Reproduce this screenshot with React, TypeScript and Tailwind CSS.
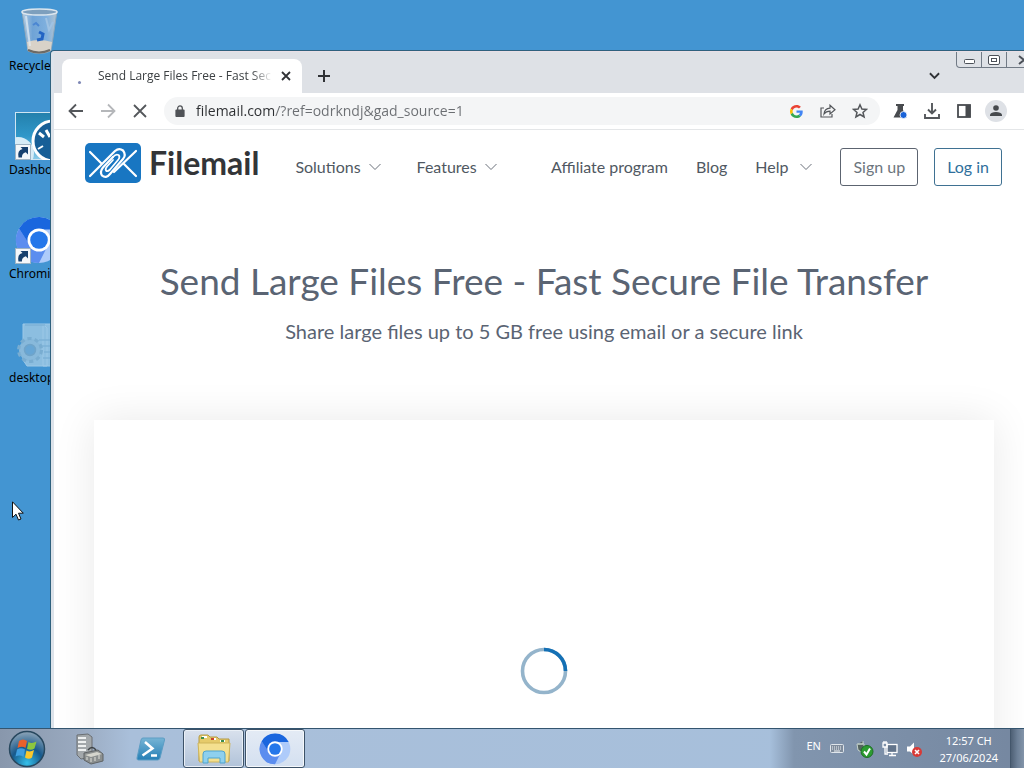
import type { ReactNode } from "react";

function RecycleBinIcon() {
  return (
    <svg viewBox="0 0 48 48" className="w-12 h-12">
      <defs>
        <linearGradient id="glass" x1="0" x2="1">
          <stop offset="0" stopColor="#b9cfe2" />
          <stop offset="0.3" stopColor="#6fa3d6" />
          <stop offset="0.7" stopColor="#7fb0de" />
          <stop offset="1" stopColor="#b4c4d0" />
        </linearGradient>
      </defs>
      <path d="M7 3 L42 3 L36 43 Q24 48 13 43 Z" fill="url(#glass)" stroke="#8fa9bd" />
      <path d="M12 34 Q24 30 37 34 L35.500 43 Q24 47 13 43 Z" fill="#d9d2c8" />
      <path d="M13 42 Q24 47 35 42" fill="none" stroke="#6d6a66" strokeWidth="2" />
      <ellipse cx="24.500" cy="4" rx="17.500" ry="3" fill="#7d9fbd" stroke="#dce6ee" strokeWidth="1.500" />
      <path d="M18 17 l3 -2 l3 3" fill="none" stroke="#4b86d2" strokeWidth="2" />
      <path d="M24 24 l4 2 l-1 5 l-5 1" fill="none" stroke="#2264c4" strokeWidth="3" />
      <path d="M31 10 L34 22 L38 14" fill="none" stroke="#9fc2e3" strokeWidth="2" />
      <path d="M11 8 L15 38" stroke="#e5eef5" strokeWidth="2" opacity="0.7" />
    </svg>
  );
}

function ShortcutArrow() {
  return (
    <g>
      <rect x="0.500" y="32.500" width="15" height="15" fill="#f4f7fa" stroke="#9fb4c4" />
      <path d="M3.500 45.500 Q2 38 7.500 37 L5.500 35 H13 V42.500 L10.800 40.300 Q6.500 41.500 7 45.500 Z" fill="#17406e" />
    </g>
  );
}

function DashboardIcon() {
  return (
    <svg viewBox="0 0 48 48" className="w-12 h-12">
      <defs>
        <linearGradient id="dash" x1="0" y1="0" x2="0" y2="1">
          <stop offset="0" stopColor="#2380ac" />
          <stop offset="0.500" stopColor="#2f97c9" />
          <stop offset="1" stopColor="#8ccbe9" />
        </linearGradient>
      </defs>
      <rect x="0.500" y="0.500" width="47" height="47" fill="url(#dash)" stroke="#cfe5f2" />
      <circle cx="3" cy="41" r="16" fill="#d7ecf7" />
      <circle cx="38" cy="29" r="20" fill="#175f97" stroke="#fff" strokeWidth="3" />
      <path d="M24 21 l5 4 M31 18 l4 7" stroke="#fff" strokeWidth="3" />
      <path d="M23 37 l5 -3" stroke="#fff" strokeWidth="2" />
      <ShortcutArrow />
    </svg>
  );
}

function ChromiumIcon({ shortcut, className }: { shortcut?: boolean; className: string }) {
  return (
    <svg viewBox="0 0 48 48" className={className}>
      <circle cx="24" cy="24" r="23" fill="#aecbfa" />
      <path d="M4 12.500 A23 23 0 0 0 24 47 L33 29 L15 29 Z" fill="#5b8def" />
      <path d="M4 12.500 A23 23 0 0 1 44.500 13.500 L24 13.500 A10.500 10.500 0 0 0 14.900 29.300 Z" fill="#1a66de" />
      <circle cx="24" cy="24" r="11.500" fill="#fff" />
      <circle cx="24" cy="24" r="8.800" fill="#2577ea" />
      {shortcut && <ShortcutArrow />}
    </svg>
  );
}

function IniFileIcon() {
  return (
    <svg viewBox="0 0 48 48" className="w-12 h-12 opacity-60">
      <path d="M8 4 H28 L32 8 V46 H12 L8 40 Z M28 4 H42 V46 H28 Z" fill="#bddaea" stroke="#d9ebf5" />
      <path d="M10 5 h20 M24 20 h16 M27 26 h14 M29 32 h12 M28 38 h13" stroke="#a3c5da" strokeWidth="1.500" />
      <circle cx="15" cy="30" r="11" fill="#b4cfdf" stroke="#9dbdd1" strokeWidth="4" strokeDasharray="4 3" />
      <circle cx="15" cy="30" r="10" fill="#b7d2e2" />
      <circle cx="15" cy="30" r="5.500" fill="#7fb2d7" stroke="#8eafc5" strokeWidth="1.500" />
    </svg>
  );
}

function FilemailLogo() {
  return (
    <svg viewBox="0 0 56 40" className="w-14 h-10">
      <rect width="56" height="40" rx="5" fill="#1876c2" />
      <g fill="none" stroke="#fff" strokeWidth="2.200" strokeLinecap="round" strokeLinejoin="round">
        <path d="M5 9 L16 20 M5 33 L30 8 Q34 4.500 38 7.500 Q41.500 12 38 16 L25 31 Q21 36 17 32.500 Q14.500 29 18 24.500 L28 14" />
        <path d="M51 8 L29 29 M51 33 L39 21" />
        <path d="M28 14 Q31 10.500 33.500 12 Q35.500 14 33 17 L25 26.500 Q22.500 29 21 27.500 Q20 26 22 23.500 L28 17" strokeWidth="1.800" />
      </g>
    </svg>
  );
}

function GoogleIcon() {
  return (
    <svg viewBox="0 0 48 48" className="w-[13px] h-[13px]">
      <path fill="#EA4335" d="M24 9.500c3.540 0 6.710 1.220 9.210 3.600l6.850-6.850C35.900 2.380 30.470 0 24 0 14.620 0 6.510 5.380 2.560 13.220l7.980 6.190C12.430 13.720 17.740 9.500 24 9.500z" />
      <path fill="#4285F4" d="M46.980 24.550c0-1.570-.15-3.090-.38-4.550H24v9.020h12.940c-.58 2.960-2.260 5.480-4.780 7.180l7.730 6c4.510-4.180 7.090-10.360 7.090-17.650z" />
      <path fill="#FBBC05" d="M10.530 28.590c-.48-1.450-.76-2.990-.76-4.590s.27-3.140.76-4.590l-7.980-6.190C.92 16.460 0 20.120 0 24c0 3.880.92 7.540 2.560 10.780l7.970-6.190z" />
      <path fill="#34A853" d="M24 48c6.480 0 11.930-2.130 15.890-5.810l-7.730-6c-2.150 1.450-4.920 2.300-8.160 2.300-6.260 0-11.570-4.220-13.470-9.910l-7.980 6.190C6.510 42.620 14.620 48 24 48z" />
    </svg>
  );
}

function Chevron() {
  return (
    <svg viewBox="0 0 12 8" className="w-3 h-2 text-[#6a717b]" fill="none" stroke="currentColor">
      <path d="M0.500 1 L6 6.500 L11.500 1" />
    </svg>
  );
}

function ToolButton({ label, children }: { label: string; children: ReactNode }) {
  return (
    <button aria-label={label} className="w-8 h-7 shrink-0 flex items-center justify-center text-[#54575b]">
      {children}
    </button>
  );
}

function DesktopItem({ label, children }: { label: string; children: ReactNode }) {
  return (
    <button className="w-[78px] h-[104px] pt-2 pl-[9px] flex flex-col items-start text-black">
      <span className="pl-[6px]">{children}</span>
      <span className="mt-[2px] text-xs leading-4 whitespace-nowrap">{label}</span>
    </button>
  );
}

function TabStrip() {
  return (
    <div className="h-[42px] shrink-0 flex items-end bg-[#dee1e6] border-t border-[#eadfe6] pl-2">
      <div className="w-60 h-[34px] pl-9 pr-2 flex items-center bg-white rounded-t-lg relative">
        <span className="absolute left-4 top-[22px] w-[3px] h-[3px] rounded-full bg-[#7e87b5]" />
        <span className="w-[174px] text-xs font-['Open_Sans',sans-serif] text-[#3c4043] whitespace-nowrap overflow-hidden [mask-image:linear-gradient(to_right,black_88%,transparent)]">
          Send Large Files Free - Fast Secure File Transfer
        </span>
        <button aria-label="Close tab" className="ml-auto w-4 h-4 flex items-center justify-center text-[#303236]">
          <svg viewBox="0 0 10 10" className="w-[10px] h-[10px]" stroke="currentColor" strokeWidth="1.800">
            <path d="M1 1 L9 9 M9 1 L1 9" />
          </svg>
        </button>
      </div>
      <button aria-label="New tab" className="w-11 h-[34px] flex items-center justify-center text-[#303236]">
        <svg viewBox="0 0 12 12" className="w-3 h-3" stroke="currentColor" strokeWidth="2">
          <path d="M6 0 V12 M0 6 H12" />
        </svg>
      </button>
      <button aria-label="Search tabs" className="ml-auto w-7 h-[34px] flex items-center justify-center text-[#303236]">
        <svg viewBox="0 0 12 8" className="w-[11px] h-2" fill="none" stroke="currentColor" strokeWidth="2">
          <path d="M1 1 L6 6 L11 1" />
        </svg>
      </button>
      <div className="self-start ml-2 flex h-4 border border-t-0 border-[#717a85] rounded-bl text-[#4b5058]">
        <button aria-label="Minimize" className="w-[25px] flex items-center justify-center border-r border-[#717a85]">
          <svg viewBox="0 0 13 9" className="w-[13px] h-[9px]">
            <rect x="1.500" y="4.500" width="10" height="4" rx="1" fill="#fff" stroke="currentColor" />
          </svg>
        </button>
        <button aria-label="Maximize" className="w-[25px] flex items-center justify-center border-r border-[#717a85]">
          <svg viewBox="0 0 12 10" className="w-3 h-[10px]" fill="#fff" stroke="currentColor">
            <rect x="0.500" y="0.500" width="11" height="9" rx="1.500" />
            <rect x="3.500" y="3.500" width="5" height="3" />
          </svg>
        </button>
        <button aria-label="Close" className="w-[26px] pl-2 flex items-center justify-center">
          <svg viewBox="0 0 12 10" className="w-3 h-[10px]" stroke="currentColor" strokeWidth="2">
            <path d="M1 1 L11 9 M11 1 L1 9" />
          </svg>
        </button>
      </div>
    </div>
  );
}

function Toolbar() {
  return (
    <div className="h-[37px] shrink-0 flex items-center bg-white border-b border-[#e4e6e8] pl-[6px] pr-[22px]">
      <ToolButton label="Back">
        <svg viewBox="0 0 16 16" className="w-4 h-4" fill="none" stroke="currentColor" strokeWidth="1.800">
          <path d="M15 8 H2 M8 1.500 L1.500 8 L8 14.500" />
        </svg>
      </ToolButton>
      <ToolButton label="Forward">
        <svg viewBox="0 0 16 16" className="w-4 h-4" fill="none" stroke="#b5b7ba" strokeWidth="1.800">
          <path d="M1 8 H14 M8 1.500 L14.500 8 L8 14.500" />
        </svg>
      </ToolButton>
      <ToolButton label="Stop">
        <svg viewBox="0 0 14 14" className="w-[14px] h-[14px]" stroke="currentColor" strokeWidth="1.800">
          <path d="M1 1 L13 13 M13 1 L1 13" />
        </svg>
      </ToolButton>
      <div className="flex-1 min-w-0 ml-2 mr-1 h-7 pl-[11px] pr-1 flex items-center bg-[#f4f5f6] rounded-full">
        <svg viewBox="0 0 10 13" className="w-[10px] h-3 shrink-0">
          <rect y="5" width="10" height="8" rx="1" fill="#505357" />
          <path d="M2.500 6 V3.500 a2.500 2.500 0 0 1 5 0 V6" fill="none" stroke="#505357" strokeWidth="1.400" />
        </svg>
        <input
          aria-label="Address"
          defaultValue="filemail.com/?ref=odrkndj&gad_source=1"
          className="flex-1 min-w-0 ml-[11px] text-sm font-['Open_Sans',sans-serif] outline-none text-transparent bg-clip-text bg-[linear-gradient(to_right,#2c2e31_78px,#6b6e72_78px)]"
        />
        <ToolButton label="Google"><GoogleIcon /></ToolButton>
        <ToolButton label="Share">
          <svg viewBox="0 0 16 14" className="w-4 h-[14px]" fill="none" stroke="currentColor" strokeWidth="1.200">
            <path d="M4 4 H1 V13 H12 V10" />
            <path d="M4 10 Q4.500 4.500 10 4.200 V1.200 L15 5.700 L10 10 V7.200 Q6 7.200 4 10 Z" />
          </svg>
        </ToolButton>
        <ToolButton label="Bookmark">
          <svg viewBox="0 0 16 16" className="w-4 h-4" fill="none" stroke="currentColor" strokeWidth="1.500">
            <path d="M8 1.800 L9.900 6 L14.500 6.400 L11 9.400 L12.100 14 L8 11.500 L3.900 14 L5 9.400 L1.500 6.400 L6.100 6 Z" />
          </svg>
        </ToolButton>
      </div>
      <ToolButton label="Experiments">
        <svg viewBox="0 0 16 16" className="w-4 h-4">
          <path d="M4 1 H12 V3 H11 V7 L14.500 14.500 H1.500 L5.500 7 V3 H4 Z" fill="#484b4f" />
          <circle cx="11.500" cy="12" r="3.500" fill="#1a63d8" stroke="#fff" strokeWidth="0.800" />
        </svg>
      </ToolButton>
      <ToolButton label="Downloads">
        <svg viewBox="0 0 16 16" className="w-4 h-4" fill="none" stroke="currentColor" strokeWidth="1.900">
          <path d="M8 0 V10 M4 6.500 L8 10.500 L12 6.500 M1 11 V15 H15 V11" />
        </svg>
      </ToolButton>
      <ToolButton label="Side panel">
        <svg viewBox="0 0 14 14" className="w-[14px] h-[14px]">
          <rect x="1" y="1" width="12" height="12" fill="none" stroke="#484b4f" strokeWidth="1.800" />
          <rect x="8.500" y="1" width="5" height="12" fill="#484b4f" />
        </svg>
      </ToolButton>
      <ToolButton label="Profile">
        <span className="w-[22px] h-[22px] rounded-full bg-[#dee1e6] flex items-center justify-center">
          <svg viewBox="0 0 12 12" className="w-3 h-3" fill="#46494d">
            <circle cx="6" cy="3" r="2.800" />
            <path d="M0 11 V9.500 Q1 7 6 7 Q11 7 12 9.500 V11 Z" />
          </svg>
        </span>
      </ToolButton>
    </div>
  );
}

function SiteHeader() {
  return (
    <header className="h-[74px] shrink-0 pl-[31px] pr-8 flex items-center text-base text-[#505862]">
      <a href="#" className="-mt-2 flex items-center gap-2 text-[#333538]">
        <FilemailLogo />
        <span className="text-[32px] leading-10 font-bold">Filemail</span>
      </a>
      <nav className="ml-9 flex items-center flex-1">
        <a href="#" className="flex items-center gap-2">
          Solutions <Chevron />
        </a>
        <a href="#" className="ml-9 flex items-center gap-2">
          Features <Chevron />
        </a>
        <span className="flex-1" />
        <a href="#" className="mr-7">Affiliate program</a>
        <a href="#" className="mr-7">Blog</a>
        <a href="#" className="mr-7 flex items-center gap-3">
          Help <Chevron />
        </a>
      </nav>
      <button className="h-[38px] px-3 mr-4 border border-[#5c6470] rounded-[3px] text-[#6c757d]">Sign up</button>
      <button className="h-[38px] px-3 border border-[#3f7192] rounded-[3px] text-[#2f6f9c]">Log in</button>
    </header>
  );
}

function BrowserWindow() {
  return (
    <section className="absolute left-[50px] top-[50px] -right-[10px] bottom-0 flex flex-col border-l border-t border-[#2f617e] rounded-tl bg-[#dde3ea] pl-[3px] overflow-hidden">
      <TabStrip />
      <Toolbar />
      <main className="flex-1 min-h-0 flex flex-col bg-white font-['Lato',sans-serif] overflow-hidden">
        <SiteHeader />
        <div className="shrink-0 pt-[53px] pb-[75px] text-center text-[#5a6473]">
          <h1 className="text-[37px] leading-[48px]">Send Large Files Free - Fast Secure File Transfer</h1>
          <p className="mt-3 text-xl leading-7">Share large files up to 5 GB free using email or a secure link</p>
        </div>
        <div className="mx-10 h-[500px] shrink-0 flex justify-center pt-[227px] bg-white shadow-[0_0_40px_rgba(0,0,0,0.09)]">
          <svg viewBox="0 0 48 48" className="w-12 h-12" fill="none" strokeWidth="3.600" role="status" aria-label="Loading">
            <circle cx="24" cy="24" r="21.500" stroke="#94b4cb" />
            <path d="M24 2.500 A21.500 21.500 0 0 1 45.500 24" stroke="#1470b5" />
          </svg>
        </div>
      </main>
    </section>
  );
}

function StartOrb() {
  return (
    <svg viewBox="0 0 38 38" className="w-[38px] h-[38px]">
      <defs>
        <radialGradient id="orb" cx="0.500" cy="0.900" r="0.900">
          <stop offset="0" stopColor="#35c0ea" />
          <stop offset="0.500" stopColor="#17598c" />
          <stop offset="1" stopColor="#8fa5b8" />
        </radialGradient>
      </defs>
      <circle cx="19" cy="19" r="17.500" fill="url(#orb)" stroke="#28485f" strokeWidth="1.500" />
      <path d="M11 11 Q15 8 19 11 L17.500 18 Q14 15.500 9.500 18 Z" fill="#e8612c" />
      <path d="M20.500 12 Q24 14 28.500 11.500 L26.500 18.500 Q23 21 19 18.800 Z" fill="#8cc63e" />
      <path d="M9 19.500 Q13 17 17 19.500 L15.500 27 Q12 24.500 7.500 26.500 Z" fill="#3f9fe0" />
      <path d="M18.500 20.500 Q22 22.500 26 20 L24 27.500 Q21 30 17 27.500 Z" fill="#fbc82c" />
    </svg>
  );
}

function ServerManagerIcon() {
  return (
    <svg viewBox="0 0 30 32" className="w-[30px] h-8">
      <path d="M3 2 L14 1 L18 4 V24 L7 26 L3 22 Z" fill="#a3a8ab" stroke="#6a6f73" />
      <path d="M4 5 h8 M4 9 h8 M4 13 h8 M4 17 h8" stroke="#eef0f0" strokeWidth="2" />
      <path d="M10 20 L24 17 L29 21 V28 L17 31 L10 27 Z" fill="#8b8f8f" stroke="#5f6365" />
      <path d="M11 22 L23 19 L28 21 L17 24 Z" fill="#d5d5cd" />
      <path d="M14 17 Q18 12 22 17" fill="none" stroke="#3e4346" strokeWidth="1.500" />
      <path d="M13 24 v3 M17 25 v4 M21 24 v4 M25 22 v4" stroke="#e1e1da" />
    </svg>
  );
}

function PowerShellIcon() {
  return (
    <svg viewBox="0 0 30 24" className="w-[30px] h-6">
      <defs>
        <linearGradient id="ps" x1="0" y1="0" x2="0" y2="1">
          <stop offset="0" stopColor="#76b4d5" />
          <stop offset="1" stopColor="#257fb6" />
        </linearGradient>
      </defs>
      <path d="M7 1 H27 Q29 1 28.500 3 L24 21 Q23.500 23 21.500 23 H2.500 Q0.500 23 1 21 L5 3 Q5.500 1 7 1 Z" fill="url(#ps)" stroke="#5c9dc4" />
      <path d="M9 5 L16.500 11.500 L6.500 18.500 M15 18.500 H21" fill="none" stroke="#fff" strokeWidth="2.500" />
    </svg>
  );
}

function ExplorerIcon() {
  return (
    <svg viewBox="0 0 34 30" className="w-[34px] h-[30px]">
      <path d="M2 3 Q2 1 4 1 H11 L13 3 H20 L22 5 H32 V27 H2 Z" fill="#e6cb6a" stroke="#b49a43" />
      <path d="M5 3 h5 M14 5 h5 M23 7 h5" stroke="#fff" strokeWidth="2" />
      <path d="M4 4 h3 M24 7 h3" stroke="#3d8d4d" strokeWidth="2" />
      <path d="M14 5 h3" stroke="#c9442d" strokeWidth="2" />
      <path d="M1 9 H33 L31.500 28 H2.500 Z" fill="#f4e08f" stroke="#cfb55a" />
      <path d="M6 29 V20 Q6 17 9 17 H25 Q28 17 28 20 V29 H23 V24 H11 V29 Z" fill="#8ed0ee" stroke="#4fa4cf" />
    </svg>
  );
}

function Taskbar() {
  return (
    <footer className="h-10 shrink-0 flex items-stretch border-t border-[#34556f] bg-[linear-gradient(to_right,#8897ac,#9aaac0_80px,#a9bfda_130px,#a6bfdb)]">
      <button aria-label="Start" className="w-[58px] pl-2 flex items-center">
        <StartOrb />
      </button>
      <button aria-label="Server Manager" className="w-[62px] flex items-center justify-center">
        <ServerManagerIcon />
      </button>
      <button aria-label="PowerShell" className="w-[62px] flex items-center justify-center">
        <PowerShellIcon />
      </button>
      <button aria-label="Explorer" className="w-[61px] mx-px flex items-center justify-center rounded-[3px] border border-[#3d5268] bg-linear-to-b from-[#d9e1ed] to-[#b1c3d9] shadow-[inset_0_0_0_1px_#e9eff6]">
        <ExplorerIcon />
      </button>
      <button aria-label="Chromium" className="w-[60px] flex items-center justify-center rounded-[3px] border border-[#3d5268] bg-linear-to-b from-[#e4ebf5] to-[#d4e0f0] shadow-[inset_0_0_0_1px_#f5f8fb]">
        <ChromiumIcon className="w-8 h-8" />
      </button>
      <div className="ml-auto pl-9 flex items-center text-[11px] text-white bg-[linear-gradient(to_right,#a6bfdb,#8195ae_24px,#7587a0)]">
        <span className="w-6 mb-1">EN</span>
        <svg viewBox="0 0 14 9" className="w-[14px] h-[9px]">
          <rect x="0.500" y="0.500" width="13" height="8" rx="1" fill="#7f8c9c" stroke="#dfe5eb" />
          <path d="M2 3 h10 M2 5 h10" stroke="#eef1f4" strokeDasharray="1 1" />
          <path d="M4 7 h6" stroke="#eef1f4" />
        </svg>
        <svg viewBox="0 0 18 18" className="ml-3 w-[18px] h-[18px]">
          <path d="M2 4 h5 v-3 M1 4 h7 v5 l-3 3 l-3 -2 z" fill="#55645f" stroke="#c6d4ce" />
          <circle cx="11" cy="11.500" r="6" fill="#2c9c31" stroke="#1d6e24" />
          <path d="M8 11.500 L10.500 14.500 L14 8.500" fill="none" stroke="#fff" strokeWidth="2" />
        </svg>
        <svg viewBox="0 0 16 16" className="ml-2 w-4 h-4" fill="none" stroke="#fff" strokeWidth="1.300">
          <rect x="5" y="3.500" width="10" height="8" fill="#62748b" />
          <path d="M7 14.500 h7 M10 11.500 v3 M1 2 h4 v4 h-4 z M3 6 v7 h3 M2 0 v2 M4 0 v2" />
        </svg>
        <svg viewBox="0 0 18 18" className="ml-[7px] w-[18px] h-[18px]">
          <path d="M2 6.500 H5 L9 2.500 V15 L5 11.500 H2 Z" fill="#fff" />
          <circle cx="12" cy="12" r="5" fill="#d83a36" />
          <path d="M10 10 L14 14 M14 10 L10 14" stroke="#fff" strokeWidth="1.600" />
        </svg>
        <div className="ml-4 text-center leading-[17px]">
          <div>12:57 CH</div>
          <div>27/06/2024</div>
        </div>
        <button aria-label="Show desktop" className="ml-3 w-[14px] h-full border-l border-[#43566b] bg-linear-to-r from-[#4e6075] via-[#6d8097] to-[#8394a9]" />
      </div>
    </footer>
  );
}

export default function App() {
  return (
    <div className="h-screen flex flex-col overflow-hidden font-['Noto_Sans',sans-serif]">
      <div className="relative flex-1 min-h-0 overflow-hidden bg-[#4395d2]">
        <div className="flex flex-col">
          <DesktopItem label="Recycle Bin"><RecycleBinIcon /></DesktopItem>
          <DesktopItem label="Dashboard"><DashboardIcon /></DesktopItem>
          <DesktopItem label="Chromium"><ChromiumIcon shortcut className="w-12 h-12" /></DesktopItem>
          <DesktopItem label="desktop.ini"><IniFileIcon /></DesktopItem>
        </div>
        <BrowserWindow />
        <svg viewBox="0 0 12 20" className="absolute left-3 top-[501px] w-3 h-5">
          <path d="M0.500 0.800 V16.500 L4 13.200 L6.500 19 L9 18 L6.500 12.200 H11.300 Z" fill="#fff" stroke="#111" />
        </svg>
      </div>
      <Taskbar />
    </div>
  );
}
